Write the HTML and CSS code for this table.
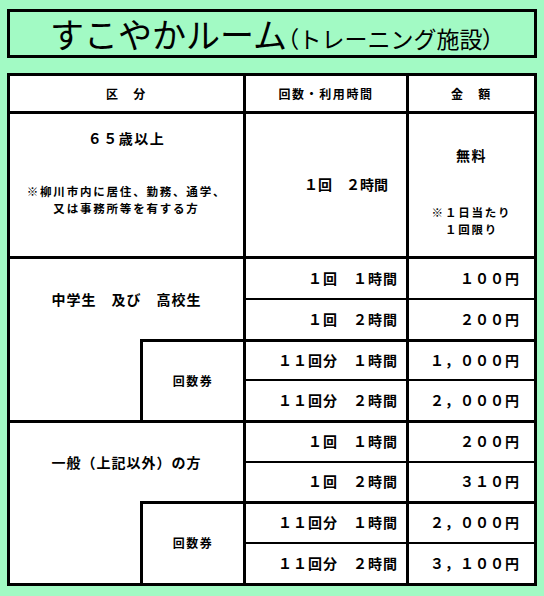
FILE: index.html
```html
<!DOCTYPE html>
<html lang="ja">
<head>
<meta charset="utf-8">
<title>すこやかルーム（トレーニング施設）</title>
<link rel="stylesheet" href="styles.css">
</head>
<body>
<div class="page">
  <h1 class="title"><span class="main">すこやかルーム</span><span class="sub"><span class="paren">（</span>トレーニング施設<span class="paren">）</span></span></h1>
  <div class="fee">
    <div class="cell hd span2 r1">区　分</div>
    <div class="cell hd col2 r1 bl">回数・利用時間</div>
    <div class="cell hd col3 r1 bl">金　額</div>

    <div class="cell senior span2 r2 bt3">
      <div class="senior-title">６５歳以上</div>
      <div class="note">
        <div class="note-line">※柳川市内に居住、勤務、通学、</div>
        <div class="note-line">又は事務所等を有する方</div>
      </div>
    </div>
    <div class="cell col2 r2 bt3 bl senior-time">１回　２時間</div>
    <div class="cell col3 r2 bt3 bl senior-fee">
      <div class="free">無料</div>
      <div class="note">
        <div class="note-line">※１日当たり</div>
        <div class="note-line">１回限り</div>
      </div>
    </div>

    <div class="cell label span2 r3-5 bt3">中学生　及び　高校生</div>
    <div class="cell col1 r5-7"></div>
    <div class="cell ticket col1b r5-7 bt3 bl">回数券</div>
    <div class="cell time col2 r3 bt3 bl">１回　１時間</div>
    <div class="cell price col3 r3 bt3 bl">１００円</div>
    <div class="cell time col2 r4 bt2 bl">１回　２時間</div>
    <div class="cell price col3 r4 bt2 bl">２００円</div>
    <div class="cell time col2 r5 bt3 bl">１１回分　１時間</div>
    <div class="cell price col3 r5 bt3 bl">１，０００円</div>
    <div class="cell time col2 r6 bt2 bl">１１回分　２時間</div>
    <div class="cell price col3 r6 bt2 bl">２，０００円</div>

    <div class="cell label span2 r7-9 bt3">一般（上記以外）の方</div>
    <div class="cell col1 r9-11"></div>
    <div class="cell ticket col1b r9-11 bt3 bl">回数券</div>
    <div class="cell time col2 r7 bt3 bl">１回　１時間</div>
    <div class="cell price col3 r7 bt3 bl">２００円</div>
    <div class="cell time col2 r8 bt2 bl">１回　２時間</div>
    <div class="cell price col3 r8 bt2 bl">３１０円</div>
    <div class="cell time col2 r9 bt3 bl">１１回分　１時間</div>
    <div class="cell price col3 r9 bt3 bl">２，０００円</div>
    <div class="cell time col2 r10 bt2 bl">１１回分　２時間</div>
    <div class="cell price col3 r10 bt2 bl">３，１００円</div>
  </div>
</div>
</body>
</html>
```
FILE: styles.css
```css
html, body {
  margin: 0;
  padding: 0;
  background: #a2fac4;
}
body {
  font-family: "Noto Sans CJK JP", "Noto Sans", sans-serif;
  color: #000;
}
.page {
  padding: 9px 7px 0;
}
.title {
  margin: 0;
  box-sizing: border-box;
  height: 49px;
  border: 3px solid #000;
  display: flex;
  justify-content: center;
  align-items: baseline;
  padding-top: 5px;
  font-weight: 400;
  line-height: 1;
}
.title .main {
  font-size: 34px;
}
.title .sub {
  font-size: 23px;
}
.title .paren {
  font-feature-settings: "palt";
}
.fee {
  margin-top: 15px;
  border: 3px solid #000;
  background: #fff;
  display: grid;
  grid-template-columns: 130px 103px 163px 128px;
  grid-template-rows: 35px 145px 42px 41px 40px 41px 41px 40px 41px 41px;
  font-weight: 700;
  font-size: 14px;
  letter-spacing: 1px;
}
.cell {
  box-sizing: border-box;
  display: flex;
  align-items: center;
  justify-content: center;
  line-height: 1.4;
}
.bt3 { border-top: 3px solid #000; }
.bt2 { border-top: 2px solid #000; }
.bl { border-left: 3px solid #000; }

.span2 { grid-column: 1 / 3; }
.col1 { grid-column: 1 / 2; }
.col1b { grid-column: 2 / 3; }
.col2 { grid-column: 3 / 4; }
.col3 { grid-column: 4 / 5; }

.r1 { grid-row: 1; }
.r2 { grid-row: 2; }
.r3 { grid-row: 3; }
.r4 { grid-row: 4; }
.r5 { grid-row: 5; }
.r6 { grid-row: 6; }
.r7 { grid-row: 7; }
.r8 { grid-row: 8; }
.r9 { grid-row: 9; }
.r10 { grid-row: 10; }
.r3-5 { grid-row: 3 / 5; }
.r5-7 { grid-row: 5 / 7; }
.r7-9 { grid-row: 7 / 9; }
.r9-11 { grid-row: 9 / 11; }

.hd {
  font-size: 12px;
  letter-spacing: 1.6px;
  padding-top: 1px;
}
.senior {
  flex-direction: column;
  justify-content: flex-start;
  padding-top: 14px;
}
.senior-title {
  line-height: 20px;
  font-size: 14px;
  letter-spacing: 1.5px;
}
.note {
  display: flex;
  flex-direction: column;
  align-items: center;
  text-align: center;
}
.note-line {
  height: 17px;
  line-height: 17px;
  font-size: 11.5px;
  letter-spacing: 1.8px;
}
.senior .note {
  margin-top: 35px;
}
.senior-time {
  justify-content: flex-end;
  padding-right: 18px;
  letter-spacing: 0;
}
.senior-fee {
  flex-direction: column;
  justify-content: flex-start;
  padding-top: 31px;
}
.free {
  line-height: 20px;
  letter-spacing: 1.5px;
}
.senior-fee .note {
  margin-top: 39px;
}
.label {
  padding-top: 1px;
}
.ticket {
  font-size: 12px;
  letter-spacing: 1.5px;
}
.time {
  justify-content: flex-end;
  padding-right: 8px;
}
.price {
  justify-content: flex-end;
  padding-right: 14px;
}
```
